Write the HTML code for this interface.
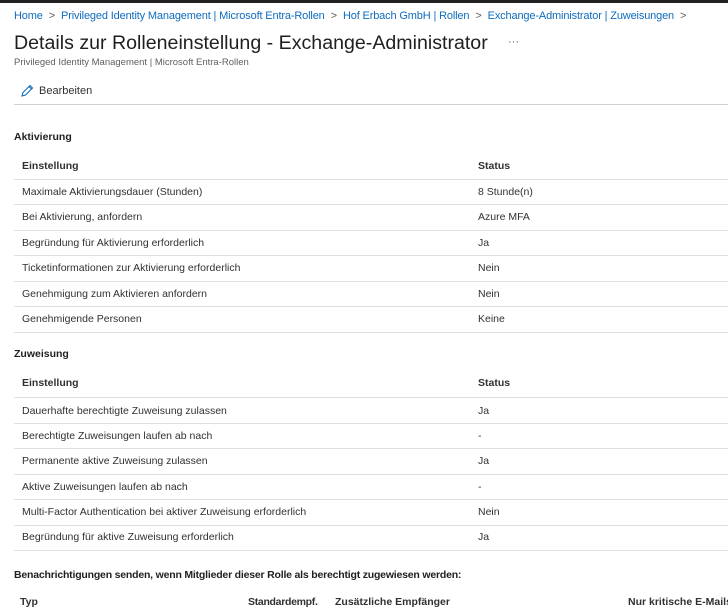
<!DOCTYPE html>
<html><head><meta charset="utf-8"><style>
*{margin:0;padding:0;box-sizing:border-box}
body{width:728px;height:600px;overflow:hidden;background:#fff;font-family:"Liberation Sans",sans-serif;color:#323130;position:relative}
.a{position:absolute;white-space:nowrap}
.bc{top:10px;left:14px;font-size:11px;letter-spacing:-0.15px;color:#0f6cbd}
.bc span{color:#605e5c;margin:0 6px}
.t{top:32px;left:14px;font-size:19.6px;color:#201f1e}
.st{top:57px;left:14px;font-size:9.5px;color:#605e5c}
.r{font-size:10.5px;color:#323130}
.h{font-size:10.5px;font-weight:bold;color:#323130}
.sec{font-size:10.5px;font-weight:bold;color:#201f1e;left:14px}
.ln{position:absolute;left:14px;right:0;height:1px;background:#e1dfdd}
</style></head><body>
<div style="position:absolute;top:0;left:0;right:0;height:3px;background:#222"></div>
<div class="a bc">Home<span>&gt;</span>Privileged Identity Management | Microsoft Entra-Rollen<span>&gt;</span>Hof Erbach GmbH | Rollen<span>&gt;</span>Exchange-Administrator | Zuweisungen<span>&gt;</span></div>
<div class="a t">Details zur Rolleneinstellung - Exchange-Administrator</div>
<div class="a" style="top:36px;left:508px;font-size:11px;color:#605e5c">···</div>
<div class="a st">Privileged Identity Management | Microsoft Entra-Rollen</div>
<svg class="a" style="top:84px;left:20px" width="14" height="14" viewBox="0 0 14 14"><path d="M2 12 L3 8.5 L10 1.5 L12.5 4 L5.5 11 Z M9 2.5 L11.5 5" fill="none" stroke="#0f6cbd" stroke-width="1.1"/></svg>
<div class="a r" style="top:85px;left:39px;font-size:11px">Bearbeiten</div>
<div style="position:absolute;top:104px;left:14px;right:0;height:1px;background:#d0d0d0"></div>

<div class="a sec" style="top:131px">Aktivierung</div>
<div class="a h" style="top:160px;left:22px">Einstellung</div><div class="a h" style="top:160px;left:478px">Status</div>
<div class="ln" style="top:179px"></div>
<div class="a r" style="top:186px;left:22px">Maximale Aktivierungsdauer (Stunden)</div><div class="a r" style="top:186px;left:478px">8 Stunde(n)</div>
<div class="ln" style="top:204px"></div>
<div class="a r" style="top:211px;left:22px">Bei Aktivierung, anfordern</div><div class="a r" style="top:211px;left:478px">Azure MFA</div>
<div class="ln" style="top:230px"></div>
<div class="a r" style="top:237px;left:22px">Begründung für Aktivierung erforderlich</div><div class="a r" style="top:237px;left:478px">Ja</div>
<div class="ln" style="top:255px"></div>
<div class="a r" style="top:262px;left:22px">Ticketinformationen zur Aktivierung erforderlich</div><div class="a r" style="top:262px;left:478px">Nein</div>
<div class="ln" style="top:281px"></div>
<div class="a r" style="top:288px;left:22px">Genehmigung zum Aktivieren anfordern</div><div class="a r" style="top:288px;left:478px">Nein</div>
<div class="ln" style="top:306px"></div>
<div class="a r" style="top:313px;left:22px">Genehmigende Personen</div><div class="a r" style="top:313px;left:478px">Keine</div>
<div class="ln" style="top:332px"></div>

<div class="a sec" style="top:348px">Zuweisung</div>
<div class="a h" style="top:377px;left:22px">Einstellung</div><div class="a h" style="top:377px;left:478px">Status</div>
<div class="ln" style="top:397px"></div>
<div class="a r" style="top:405px;left:22px">Dauerhafte berechtigte Zuweisung zulassen</div><div class="a r" style="top:405px;left:478px">Ja</div>
<div class="ln" style="top:423px"></div>
<div class="a r" style="top:430px;left:22px">Berechtigte Zuweisungen laufen ab nach</div><div class="a r" style="top:430px;left:478px">-</div>
<div class="ln" style="top:448px"></div>
<div class="a r" style="top:455px;left:22px">Permanente aktive Zuweisung zulassen</div><div class="a r" style="top:455px;left:478px">Ja</div>
<div class="ln" style="top:474px"></div>
<div class="a r" style="top:481px;left:22px">Aktive Zuweisungen laufen ab nach</div><div class="a r" style="top:481px;left:478px">-</div>
<div class="ln" style="top:499px"></div>
<div class="a r" style="top:506px;left:22px">Multi-Factor Authentication bei aktiver Zuweisung erforderlich</div><div class="a r" style="top:506px;left:478px">Nein</div>
<div class="ln" style="top:525px"></div>
<div class="a r" style="top:531px;left:22px">Begründung für aktive Zuweisung erforderlich</div><div class="a r" style="top:531px;left:478px">Ja</div>
<div class="ln" style="top:550px"></div>

<div class="a sec" style="top:569px;letter-spacing:-0.2px">Benachrichtigungen senden, wenn Mitglieder dieser Rolle als berechtigt zugewiesen werden:</div>
<div class="a h" style="top:596px;left:20px">Typ</div>
<div class="a h" style="top:596px;left:248px;letter-spacing:-0.3px">Standardempf.</div>
<div class="a h" style="top:596px;left:335px">Zusätzliche Empfänger</div>
<div class="a h" style="top:596px;left:628px">Nur kritische E-Mails</div>
</body></html>
